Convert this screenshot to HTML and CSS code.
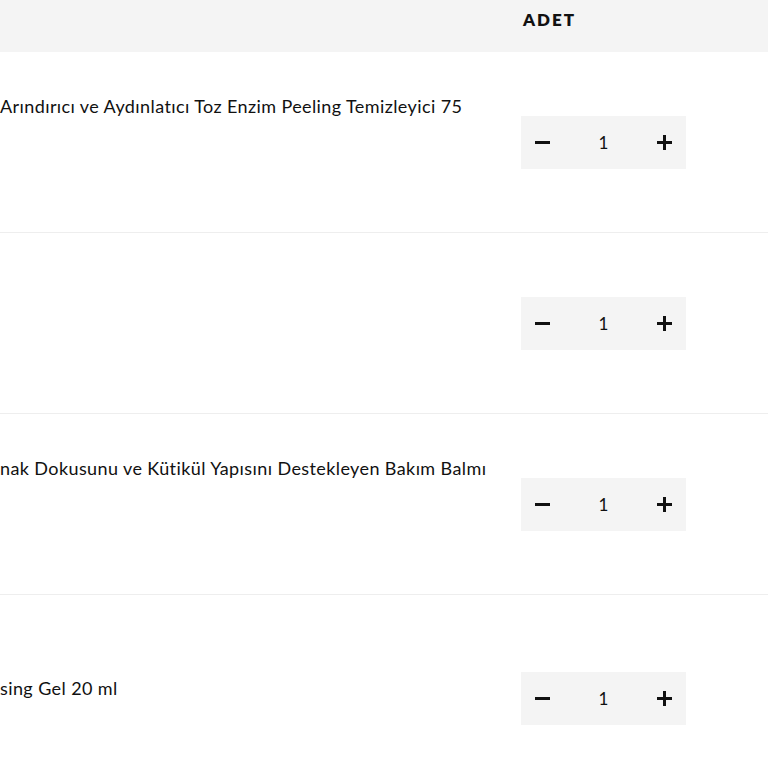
FILE: index.html
```html
<!DOCTYPE html>
<html lang="tr">
<head>
    <meta charset="UTF-8">
    <meta name="viewport" content="width=device-width, initial-scale=1.0">
    <title>Sepet</title>
    <link rel="stylesheet" href="styles.css">
</head>
<body>
    <div class="cart-table">
        <div class="cart-head">
            <div class="col-product"></div>
            <div class="head-label">ADET</div>
        </div>

        <div class="cart-row">
            <div class="col-product">
                <div class="product-name">Arındırıcı ve Aydınlatıcı Toz Enzim Peeling Temizleyici 75</div>
            </div>
            <div class="col-qty">
                <div class="qty-box">
                    <button class="qty-btn" type="button" aria-label="Azalt">
                        <svg width="15" height="15" viewBox="0 0 15 15"><rect x="0" y="6" width="15" height="3" fill="#111"/></svg>
                    </button>
                    <span class="qty-value">1</span>
                    <button class="qty-btn" type="button" aria-label="Artır">
                        <svg width="15" height="15" viewBox="0 0 15 15"><rect x="0" y="6" width="15" height="3" fill="#111"/><rect x="6" y="0" width="3" height="15" fill="#111"/></svg>
                    </button>
                </div>
            </div>
        </div>

        <div class="cart-row">
            <div class="col-product">
                <div class="product-name"></div>
            </div>
            <div class="col-qty">
                <div class="qty-box">
                    <button class="qty-btn" type="button" aria-label="Azalt">
                        <svg width="15" height="15" viewBox="0 0 15 15"><rect x="0" y="6" width="15" height="3" fill="#111"/></svg>
                    </button>
                    <span class="qty-value">1</span>
                    <button class="qty-btn" type="button" aria-label="Artır">
                        <svg width="15" height="15" viewBox="0 0 15 15"><rect x="0" y="6" width="15" height="3" fill="#111"/><rect x="6" y="0" width="3" height="15" fill="#111"/></svg>
                    </button>
                </div>
            </div>
        </div>

        <div class="cart-row">
            <div class="col-product">
                <div class="product-name">nak Dokusunu ve Kütikül Yapısını Destekleyen Bakım Balmı</div>
            </div>
            <div class="col-qty">
                <div class="qty-box">
                    <button class="qty-btn" type="button" aria-label="Azalt">
                        <svg width="15" height="15" viewBox="0 0 15 15"><rect x="0" y="6" width="15" height="3" fill="#111"/></svg>
                    </button>
                    <span class="qty-value">1</span>
                    <button class="qty-btn" type="button" aria-label="Artır">
                        <svg width="15" height="15" viewBox="0 0 15 15"><rect x="0" y="6" width="15" height="3" fill="#111"/><rect x="6" y="0" width="3" height="15" fill="#111"/></svg>
                    </button>
                </div>
            </div>
        </div>

        <div class="cart-row cart-row-tall">
            <div class="col-product">
                <div class="product-name">sing Gel 20 ml</div>
            </div>
            <div class="col-qty">
                <div class="qty-box">
                    <button class="qty-btn" type="button" aria-label="Azalt">
                        <svg width="15" height="15" viewBox="0 0 15 15"><rect x="0" y="6" width="15" height="3" fill="#111"/></svg>
                    </button>
                    <span class="qty-value">1</span>
                    <button class="qty-btn" type="button" aria-label="Artır">
                        <svg width="15" height="15" viewBox="0 0 15 15"><rect x="0" y="6" width="15" height="3" fill="#111"/><rect x="6" y="0" width="3" height="15" fill="#111"/></svg>
                    </button>
                </div>
            </div>
        </div>
    </div>
</body>
</html>
```

FILE: styles.css
```css
body {
    margin: 0;
    padding: 0;
    background: #fff;
    color: #111;
    font-family: Lato, "Noto Sans", sans-serif;
    overflow: hidden;
}

.cart-table {
    width: 768px;
}

.cart-head {
    display: flex;
    height: 52px;
    background-color: #f4f4f4;
}

.head-label {
    padding: 10px 0 0 2px;
    font-size: 17px;
    line-height: 20px;
    font-weight: 800;
    letter-spacing: 2px;
}

.col-product {
    width: 521px;
    flex-shrink: 0;
}

.col-qty {
    flex: 1;
    display: flex;
    align-items: center;
}

.cart-row {
    display: flex;
    height: 180px;
    border-bottom: 1px solid #eeeeee;
}

.cart-row-tall {
    height: 206px;
}

.product-name {
    padding-top: 42px;
    font-size: 18px;
    line-height: 24px;
    letter-spacing: 0.4px;
    white-space: nowrap;
}

.cart-row-tall .product-name {
    padding-top: 81px;
}

.qty-box {
    display: flex;
    align-items: center;
    justify-content: space-between;
    width: 165px;
    height: 53px;
    padding: 0 14px;
    box-sizing: border-box;
    background-color: #f4f4f4;
}

.qty-btn {
    border: none;
    background: none;
    padding: 0;
    width: 15px;
    height: 15px;
    cursor: pointer;
}

.qty-btn svg {
    display: block;
}

.qty-value {
    font-size: 17px;
    color: #111;
}
```
